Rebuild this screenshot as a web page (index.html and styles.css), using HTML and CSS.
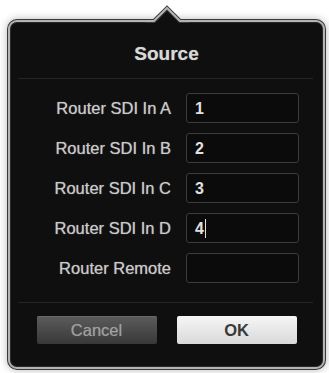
FILE: index.html
```html
<!DOCTYPE html>
<html>
<head>
<meta charset="utf-8">
<link rel="stylesheet" href="styles.css">
</head>
<body>
<div class="popover">
  <svg class="arrow" width="44" height="24" viewBox="0 0 44 24">
    <path d="M0 17 H9 L22 4 L35 17 H44 V24 H0 Z" fill="#0f0f0f"/>
    <path d="M0 17 H9 L22 4 L35 17 H44" fill="none" stroke="#3a3a3a" stroke-width="4"/>
    <path d="M0 17 H9 L22 4 L35 17 H44" fill="none" stroke="#b4b4b4" stroke-width="2"/>
  </svg>
  <div class="header">Source</div>
  <div class="sep"></div>
  <div class="form">
    <div class="label">Router SDI In A</div>
    <div class="field">1</div>
    <div class="label">Router SDI In B</div>
    <div class="field">2</div>
    <div class="label">Router SDI In C</div>
    <div class="field">3</div>
    <div class="label">Router SDI In D</div>
    <div class="field">4<span class="caret"></span></div>
    <div class="label">Router Remote</div>
    <div class="field"></div>
  </div>
  <div class="sep sep-low"></div>
  <div class="buttons">
    <div class="btn btn-cancel">Cancel</div>
    <div class="btn btn-ok">OK</div>
  </div>
</div>
</body>
</html>
```
FILE: styles.css
```css
html, body {
  margin: 0;
  padding: 0;
  background: #ffffff;
}
body {
  font-family: "Liberation Sans", Arial, sans-serif;
  width: 329px;
  height: 373px;
  overflow: hidden;
}
.popover {
  position: relative;
  box-sizing: border-box;
  margin: 20px 0 0 8px;
  width: 317px;
  height: 349px;
  background: #0f0f0f;
  border: 2px solid #b4b4b4;
  border-radius: 9px;
  box-shadow: 0 0 0 1px #3a3a3a, 0 0 8px 1px rgba(0,0,0,0.28), inset 0 0 0 1px #2a2a2a;
  display: flex;
  flex-direction: column;
}
.arrow {
  position: absolute;
  left: 50%;
  margin-left: -22px;
  top: -18px;
}
.header {
  padding: 21px 0 13px;
  line-height: 22px;
  font-size: 19px;
  font-weight: bold;
  color: #d8d8d8;
  text-align: center;
  text-shadow: 0 0 1px rgba(216,216,216,0.6);
}
.sep {
  height: 1px;
  background: #262626;
  margin: 0 10px 0 8px;
}
.form {
  display: grid;
  grid-template-columns: 1fr 113px;
  column-gap: 15px;
  row-gap: 10px;
  grid-auto-rows: 30px;
  padding: 14px 24px 0 0;
}
.label {
  justify-self: end;
  align-self: center;
  font-size: 16.5px;
  color: #cacaca;
  line-height: 20px;
  text-shadow: 0 0 1px rgba(200,200,200,0.7);
}
.field {
  box-sizing: border-box;
  border: 1.5px solid #3c3c3c;
  border-radius: 3px;
  background: #0b0b0b;
  color: #e0e0e0;
  font-weight: bold;
  font-size: 16px;
  line-height: 27px;
  padding-left: 8px;
  display: flex;
  align-items: center;
}
.caret {
  display: inline-block;
  width: 1px;
  height: 19px;
  background: #e0e0e0;
  margin-left: 1px;
}
.sep-low {
  margin-top: 19px;
}
.buttons {
  display: flex;
  justify-content: center;
  gap: 20px;
  margin-top: 13px;
}
.btn {
  box-sizing: border-box;
  width: 120px;
  height: 28px;
  border-radius: 2px;
  font-size: 16.5px;
  line-height: 28px;
  text-align: center;
}
.btn-cancel {
  background: linear-gradient(#5c5c5c, #383838);
  color: #a0a0a0;
  box-shadow: inset 0 1px 0 #6a6a6a;
  text-shadow: 0 0 1px rgba(160,160,160,0.6);
}
.btn-ok {
  background: linear-gradient(#f6f6f6, #d9d9d9);
  color: #3a3a3a;
  font-weight: bold;
}
```
